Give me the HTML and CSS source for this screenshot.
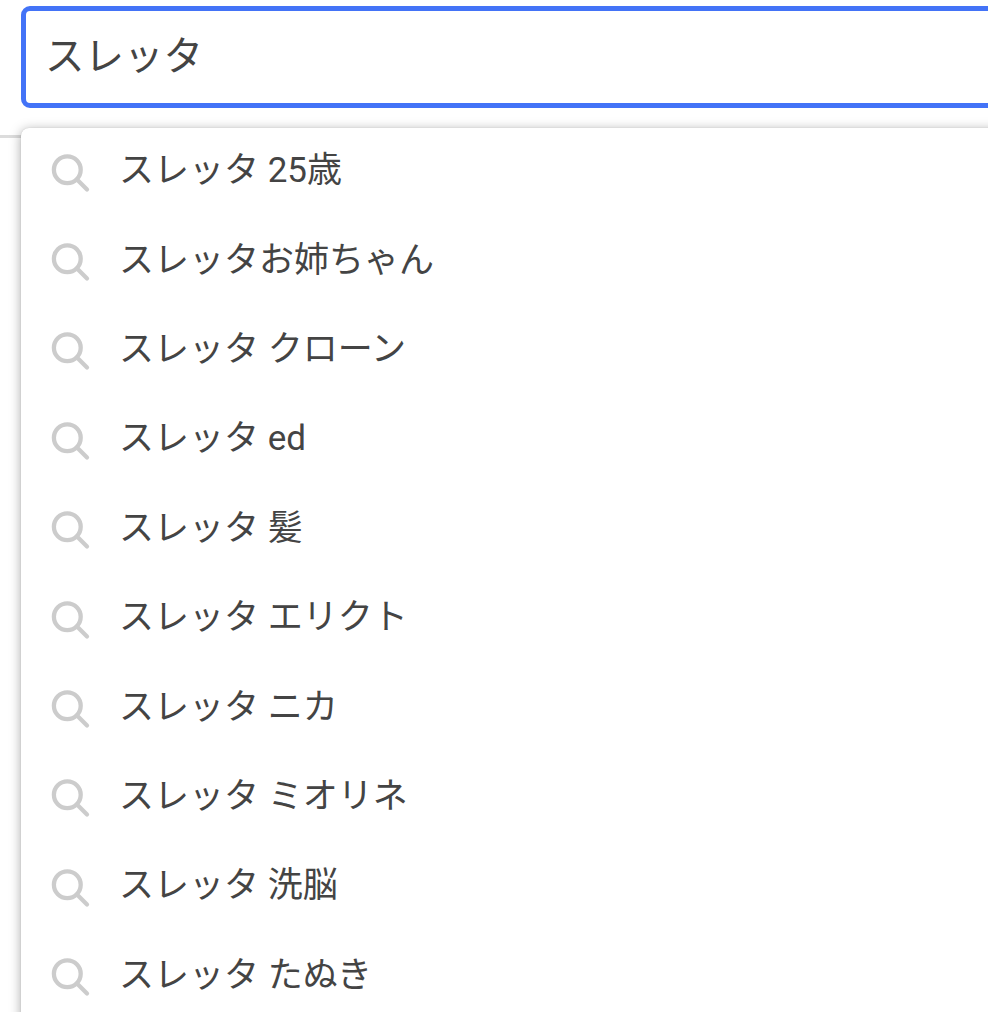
FILE: index.html
```
<!DOCTYPE html>
<html lang="ja">

<head>
    <meta charset="UTF-8">
    <meta name="viewport" content="width=device-width, initial-scale=1.0">
    <title>検索</title>
    <link rel="stylesheet" href="styles.css">
</head>

<body>
    <svg width="0" height="0" class="sprite">
        <symbol id="search" viewBox="0 0 40 40">
            <circle cx="16.3" cy="16.7" r="13.4" />
            <path d="M26 26.5L36 36.5" />
        </symbol>
    </svg>

    <header class="search-bar">
        <div class="search-box">スレッタ</div>
    </header>

    <ul class="suggestions">
        <li><svg class="icon"><use href="#search" /></svg><span>スレッタ 25歳</span></li>
        <li><svg class="icon"><use href="#search" /></svg><span>スレッタお姉ちゃん</span></li>
        <li><svg class="icon"><use href="#search" /></svg><span>スレッタ クローン</span></li>
        <li><svg class="icon"><use href="#search" /></svg><span>スレッタ ed</span></li>
        <li><svg class="icon"><use href="#search" /></svg><span>スレッタ 髪</span></li>
        <li><svg class="icon"><use href="#search" /></svg><span>スレッタ エリクト</span></li>
        <li><svg class="icon"><use href="#search" /></svg><span>スレッタ ニカ</span></li>
        <li><svg class="icon"><use href="#search" /></svg><span>スレッタ ミオリネ</span></li>
        <li><svg class="icon"><use href="#search" /></svg><span>スレッタ 洗脳</span></li>
        <li><svg class="icon"><use href="#search" /></svg><span>スレッタ たぬき</span></li>
    </ul>
</body>

</html>
```
FILE: styles.css
```
* {
    box-sizing: border-box;
}

body {
    margin: 0;
    height: 1012px;
    overflow: hidden;
    background: #fff;
    color: #444;
    font-family: Roboto, "Noto Sans CJK JP", sans-serif;
}

.sprite {
    display: block;
}

.search-bar {
    height: 138px;
    padding: 6px 0 0 21px;
    border-bottom: 3px solid #dcdcdc;
}

.search-box {
    width: 1000px;
    height: 102px;
    padding-left: 19px;
    border: 5px solid #4373f7;
    border-radius: 9px;
    font-size: 39.5px;
    line-height: 92px;
}

.suggestions {
    position: relative;
    width: 1000px;
    height: 920px;
    margin: -10px 0 0 21px;
    padding: 0 0 0 30px;
    list-style: none;
    background: #fff;
    border-radius: 8px 0 0 0;
    box-shadow: 0 2px 12px rgba(0, 0, 0, 0.35), 0 0 1px rgba(0, 0, 0, 0.2);
}

.suggestions li {
    display: flex;
    align-items: center;
    gap: 28px;
    height: 89.4px;
    font-size: 35px;
    white-space: pre;
}

.suggestions span {
    padding-bottom: 12px;
}

.icon {
    width: 40px;
    height: 40px;
    fill: none;
    stroke: #ccc;
    stroke-width: 4.3;
    stroke-linecap: round;
}
```
